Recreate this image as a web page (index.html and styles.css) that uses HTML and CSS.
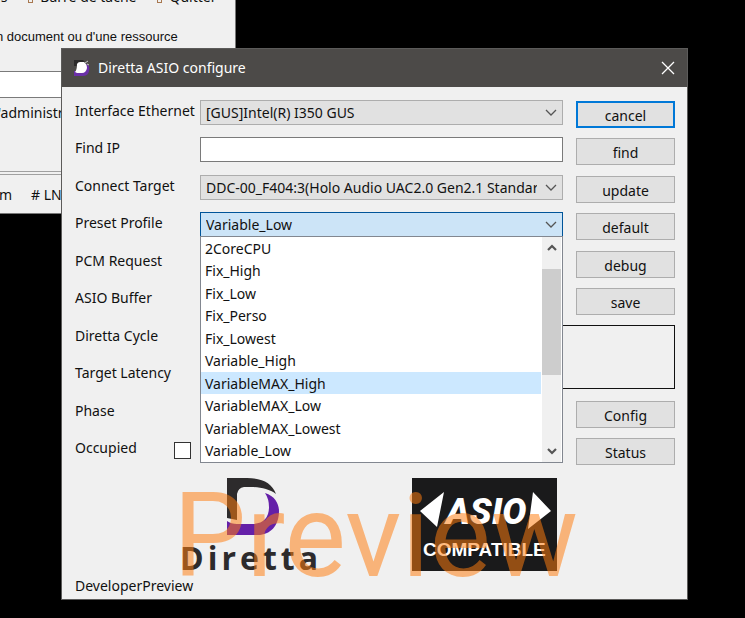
FILE: index.html
```html
<!DOCTYPE html>
<html lang="en">
<head>
    <meta charset="UTF-8">
    <meta name="viewport" content="width=device-width, initial-scale=1.0">
    <title>Diretta ASIO configure</title>
    <link rel="stylesheet" href="styles.css">
</head>
<body>
    <div class="back-window" lang="fr">
        <div class="menu">
            <span>ns</span>
            <span class="entry"><i class="bullet"></i>Barre de tâche</span>
            <span class="entry"><i class="bullet"></i>Quitter</span>
        </div>
        <p class="hint">n document ou d'une ressource</p>
        <input class="open-box" type="text" aria-label="Ouvrir">
        <p class="admin">'administr</p>
        <div class="taskbar"><span>m</span><span># LN</span></div>
    </div>

    <main class="dialog">
        <header class="titlebar">
            <svg class="app-icon" width="16" height="16" viewBox="0 0 16 16">
                <path d="M0 0H9L12 3V6H0Z" fill="#2b2a2a"/>
                <path d="M0 11V16H9C14 16 16 12 15 6L12 4V11Z" fill="#6a2fa8"/>
                <path d="M3 4Q4 2 6 2H10Q13 4 13 8Q12 13 8 13H3L1 12Q3 10 3 4Z" fill="#fff"/>
                <path d="M11 3L14 1M13 4L15 5" stroke="#ccc" fill="none"/>
            </svg>
            <h1>Diretta ASIO configure</h1>
            <button class="close" aria-label="Close">
                <svg width="14" height="14" viewBox="0 0 14 14"><path d="M1 1L13 13M13 1L1 13" stroke="#fff" stroke-width="1.3"/></svg>
            </button>
        </header>

        <form class="settings">
            <label class="name" for="ethernet">Interface Ethernet</label>
            <select id="ethernet" class="combo"><option>[GUS]Intel(R) I350 GUS</option></select>
            <button type="button" class="btn primary">cancel</button>

            <label class="name" for="ip">Find IP</label>
            <input id="ip" class="textbox" type="text">
            <button type="button" class="btn">find</button>

            <label class="name" for="target">Connect Target</label>
            <select id="target" class="combo"><option>DDC-00_F404:3(Holo Audio UAC2.0 Gen2.1 Standard)</option></select>
            <button type="button" class="btn">update</button>

            <label class="name" for="profile">Preset Profile</label>
            <div class="open-combo">
                <select id="profile" class="combo active"><option>Variable_Low</option></select>
                <div class="popup">
                    <ul class="options" role="listbox" aria-label="Preset Profile">
                        <li role="option">2CoreCPU</li>
                        <li role="option">Fix_High</li>
                        <li role="option">Fix_Low</li>
                        <li role="option">Fix_Perso</li>
                        <li role="option">Fix_Lowest</li>
                        <li role="option">Variable_High</li>
                        <li role="option" class="hover" aria-selected="true">VariableMAX_High</li>
                        <li role="option">VariableMAX_Low</li>
                        <li role="option">VariableMAX_Lowest</li>
                        <li role="option">Variable_Low</li>
                    </ul>
                    <div class="scrollbar">
                        <svg width="10" height="8" viewBox="0 0 10 8"><path d="M1 6L5 2L9 6" fill="none" stroke="#555" stroke-width="2.2"/></svg>
                        <div class="track"><div class="thumb"></div></div>
                        <svg width="10" height="8" viewBox="0 0 10 8"><path d="M1 2L5 6L9 2" fill="none" stroke="#555" stroke-width="2.2"/></svg>
                    </div>
                </div>
            </div>
            <button type="button" class="btn">default</button>

            <span class="name">PCM Request</span>
            <button type="button" class="btn">debug</button>

            <span class="name">ASIO Buffer</span>
            <button type="button" class="btn">save</button>

            <span class="name">Diretta Cycle</span>
            <div class="info-box"></div>

            <span class="name">Target Latency</span>

            <span class="name">Phase</span>
            <button type="button" class="btn">Config</button>

            <div class="name check">
                <label for="occupied">Occupied</label>
                <input id="occupied" type="checkbox">
            </div>
            <button type="button" class="btn">Status</button>
        </form>

        <footer class="brand">
            <div class="logos">
                <svg width="144" height="94" viewBox="0 0 144 94">
                    <path d="M45 0H65C80 0 90 5 94 16C87 11 78 9 68 9H62Q56 10 55 16V42L45 40Z" fill="#2d2b2c"/>
                    <path d="M83 15C93 18 97 26 97 33C97 48 88 57 76 57H45V43Q49 46 55 46H71Q87 45 87 29Q87 21 83 15Z" fill="#6420a8"/>
                    <text class="wordmark" x="-2" y="92">Diretta</text>
                </svg>
                <svg width="145" height="93" viewBox="0 0 145 93">
                    <rect width="145" height="93" fill="#1a1a1b"/>
                    <path d="M8 33L32 14L25 49Z M121 14L139 33L116 51Z" fill="#fff"/>
                    <text class="asio" x="34" y="46">ASIO</text>
                    <text class="compatible" x="11" y="78">COMPATIBLE</text>
                </svg>
                <span class="watermark">Preview</span>
            </div>
            <p>DeveloperPreview</p>
        </footer>
    </main>
</body>
</html>
```
FILE: styles.css
```css
* {
    box-sizing: border-box;
}
body {
    margin: 0;
    min-height: 100vh;
    padding: 48px 57px 17px 61px;
    background-color: #000;
    color: #111;
    font-family: "Noto Sans", "Open Sans", sans-serif;
    font-size: 14px;
    line-height: 22px;
}
h1, p, ul {
    margin: 0;
    padding: 0;
    font-size: 14px;
    font-weight: normal;
}
button, input, select {
    margin: 0;
    border-radius: 0;
    color: inherit;
    font: inherit;
}

/* window behind the dialog */
.back-window {
    position: absolute;
    top: 0;
    left: 0;
    width: 236px;
    height: 214px;
    overflow: hidden;
    background-color: #f0f0f0;
    border-right: 1px solid #777;
    border-bottom: 1px solid #777;
    white-space: nowrap;
}
.menu {
    display: flex;
    gap: 21px;
    margin: -14px 0 18px -8px;
}
.entry {
    display: flex;
    align-items: center;
    gap: 7px;
}
.bullet {
    width: 5px;
    height: 5px;
    margin-top: 7px;
    border: 1px solid #a87850;
}
.hint {
    margin-left: -4px;
    font-family: "Liberation Sans", Arial, sans-serif;
    font-size: 13px;
}
.open-box {
    display: block;
    width: 100%;
    height: 27px;
    margin-top: 23px;
    border: 1px solid #7a7a7a;
    border-left: 0;
    background-color: #fff;
}
.admin {
    height: 74px;
    padding-top: 4px;
    border-bottom: 1px solid #a0a0a0;
    margin-left: -2px;
}
.taskbar {
    display: flex;
    gap: 19px;
    margin: 2px 0 0 -1px;
    padding-top: 9px;
    border-top: 1px solid #a0a0a0;
}

/* dialog */
.dialog {
    position: relative;
    background-color: #f0f0f0;
    border: 1px solid #5c5b5a;
}
.titlebar {
    display: flex;
    align-items: center;
    height: 38px;
    padding: 0 12px;
    background-color: #4c4a48;
    color: #fff;
}
.app-icon {
    margin-right: 8px;
}
.close {
    display: flex;
    margin-left: auto;
    padding: 0;
    border: 0;
    background: none;
}
.settings {
    display: grid;
    grid-template-columns: 125px 1fr 112px;
    grid-auto-rows: 37px 38px;
    align-items: start;
    padding: 13px 12px 0 13px;
}
.name {
    grid-column: 1;
    white-space: nowrap;
}
.combo, .textbox {
    display: block;
    width: 100%;
    min-width: 0;
    height: 25px;
    padding: 0 25px 0 5px;
    border: 1px solid #adadad;
}
.combo {
    appearance: none;
    background: #e1e1e1 url("data:image/svg+xml,%3Csvg xmlns='http://www.w3.org/2000/svg' width='12' height='8'%3E%3Cpath d='M1 1L6 6L11 1' fill='none' stroke='%23555' stroke-width='1.3'/%3E%3C/svg%3E") no-repeat right 5px center;
}
.combo.active {
    background-color: #cce4f7;
    border-color: #005499;
}
.textbox {
    background-color: #fff;
    border-color: #7a7a7a;
}
.btn {
    grid-column: 3;
    height: 27px;
    margin: 1px 0 0 13px;
    padding: 3px 0 0;
    border: 1px solid #adadad;
    background-color: #e1e1e1;
}
.btn.primary {
    padding-top: 2px;
    border: 2px solid #0078d7;
}
.info-box {
    grid-column: 2 / 4;
    grid-row: 7 / 9;
    height: 64px;
    border: 1px solid #111;
}
.check {
    display: flex;
    justify-content: space-between;
    padding-right: 9px;
}
.check input {
    appearance: none;
    width: 17px;
    height: 17px;
    margin-top: 5px;
    border: 1px solid #333;
    background-color: #fff;
}

/* opened list */
.open-combo {
    position: relative;
}
.popup {
    position: absolute;
    top: 24px;
    left: 0;
    right: 0;
    z-index: 1;
    display: flex;
    background-color: #fff;
    border: 1px solid #828790;
}
.options {
    flex: 1;
    display: grid;
    grid-auto-rows: 22px 23px;
    margin-right: 1px;
    list-style: none;
}
.options li {
    padding-left: 4px;
    line-height: 24px;
}
.options .hover {
    background-color: #cce8ff;
}
.scrollbar {
    display: flex;
    flex-direction: column;
    align-items: center;
    width: 19px;
    margin-right: 1px;
    padding: 7px 0;
    background-color: #f0f0f0;
}
.track {
    flex: 1;
    width: 100%;
    padding: 17px 0;
}
.thumb {
    height: 106px;
    background-color: #cdcdcd;
}

/* logos */
.brand {
    padding: 3px 12px 2px 13px;
}
.logos {
    position: relative;
    display: flex;
    gap: 86px;
    margin: 0 0 3px 107px;
}
.wordmark {
    fill: #2d2b2c;
    font: bold 32px "Open Sans", sans-serif;
    letter-spacing: 4px;
}
.asio {
    fill: #fff;
    font: italic 900 36px Roboto, sans-serif;
}
.compatible {
    fill: #fff;
    font: bold 19px "Liberation Sans", Arial, sans-serif;
}
.watermark {
    position: absolute;
    left: -9px;
    bottom: -22px;
    color: rgba(255, 124, 16, 0.53);
    font: 116px/116px Roboto, sans-serif;
}
```
